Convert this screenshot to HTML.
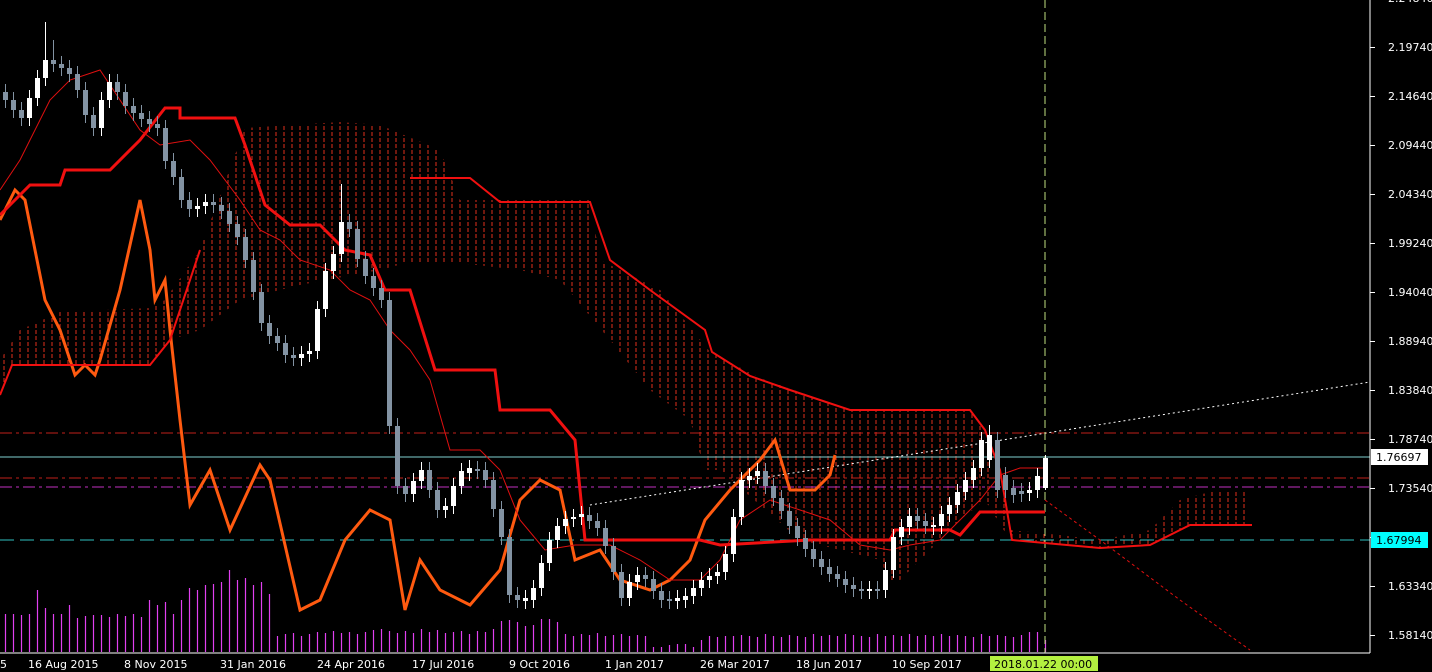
<!DOCTYPE html><html><head><style>
html,body{margin:0;padding:0;background:#000;width:1432px;height:672px;overflow:hidden}
svg{position:absolute;left:0;top:0}
text{font-family:"DejaVu Sans","Liberation Sans",sans-serif;font-size:11px;fill:#fff}
</style></head><body>
<svg width="1432" height="672" viewBox="0 0 1432 672">
<defs>
<pattern id="h" width="8" height="6" patternUnits="userSpaceOnUse">
<line x1="4" y1="0" x2="4" y2="4" stroke="#e0301c" stroke-width="1"/>
</pattern>
</defs>
<path stroke="#e040f0" stroke-width="1.2" fill="none" d="M5.5 652V614M13.5 652V614M21.5 652V615M29.5 652V614M37.5 652V590M45.5 652V608M53.5 652V614M61.5 652V614M69.5 652V605M77.5 652V618M85.5 652V616M93.5 652V615M101.5 652V615M109.5 652V617M117.5 652V614M125.5 652V616M133.5 652V614M141.5 652V617M149.5 652V600M157.5 652V605M165.5 652V602M173.5 652V614M181.5 652V600M189.5 652V588M197.5 652V590M205.5 652V585M213.5 652V584M221.5 652V582M229.5 652V570M237.5 652V580M245.5 652V578M253.5 652V585M261.5 652V582M269.5 652V594M277.5 652V636M285.5 652V634M293.5 652V633M301.5 652V636M309.5 652V634M317.5 652V632M325.5 652V633M333.5 652V631M341.5 652V633M349.5 652V632M357.5 652V634M365.5 652V632M373.5 652V630M381.5 652V629M389.5 652V631M397.5 652V633M405.5 652V631M413.5 652V633M421.5 652V629M429.5 652V632M437.5 652V630M445.5 652V633M453.5 652V632M461.5 652V631M469.5 652V634M477.5 652V631M485.5 652V632M493.5 652V629M501.5 652V621M509.5 652V620M517.5 652V622M525.5 652V626M533.5 652V625M541.5 652V619M549.5 652V619M557.5 652V622M565.5 652V634M573.5 652V636M581.5 652V634M589.5 652V635M597.5 652V633M605.5 652V636M613.5 652V635M621.5 652V634M629.5 652V636M637.5 652V635M645.5 652V636M653.5 652V647M661.5 652V647M669.5 652V645M677.5 652V644M685.5 652V644M693.5 652V647M701.5 652V640M709.5 652V636M717.5 652V637M725.5 652V636M733.5 652V636M741.5 652V635M749.5 652V636M757.5 652V637M765.5 652V634M773.5 652V636M781.5 652V637M789.5 652V635M797.5 652V636M805.5 652V637M813.5 652V634M821.5 652V636M829.5 652V635M837.5 652V636M845.5 652V634M853.5 652V635M861.5 652V636M869.5 652V637M877.5 652V634M885.5 652V636M893.5 652V635M901.5 652V636M909.5 652V634M917.5 652V636M925.5 652V635M933.5 652V636M941.5 652V634M949.5 652V636M957.5 652V635M965.5 652V636M973.5 652V637M981.5 652V634M989.5 652V636M997.5 652V635M1005.5 652V636M1013.5 652V637M1021.5 652V635M1029.5 652V632M1037.5 652V632M1045.5 652V640"/>
<polygon fill="url(#h)" points="0,360 20,330 60,312 150,308 165,300 200,250 245,128 340,122 380,125 440,150 460,200 510,200 590,200 600,260 660,290 710,352 760,378 850,410 970,410 985,430 1000,470 1010,530 1060,535 1100,540 1150,530 1180,500 1210,492 1250,490 1250,525 1190,525 1150,545 1100,548 1010,540 985,500 960,520 900,580 890,580 880,560 800,540 720,470 705,470 690,420 650,390 610,340 560,280 520,270 450,262 410,262 380,270 300,285 240,300 200,330 170,340 150,365 10,365 0,395"/>
<line x1="0" y1="433" x2="1370" y2="433" stroke="#c0201a" stroke-dasharray="12,4,3,4"/>
<line x1="0" y1="478" x2="1370" y2="478" stroke="#c0201a" stroke-dasharray="12,4,3,4"/>
<line x1="0" y1="487" x2="1370" y2="487" stroke="#c030c0" stroke-dasharray="12,4,3,4"/>
<line x1="0" y1="457" x2="1370" y2="457" stroke="#80d0d0"/>
<line x1="0" y1="540" x2="1370" y2="540" stroke="#30c0c0" stroke-dasharray="14,6"/>
<line x1="590" y1="505" x2="1370" y2="382" stroke="#fff" stroke-dasharray="2,3"/>
<line x1="1045" y1="0" x2="1045" y2="653" stroke="#c0e080" stroke-dasharray="8,4"/>
<polyline fill="none" stroke="#ff5a10" stroke-width="3" points="0,220 15,190 25,200 45,300 60,330 75,375 85,365 95,375 100,360 120,290 140,200 150,250 155,300 165,280 170,330 180,420 190,505 210,470 230,530 260,465 270,480 300,610 320,600 345,540 370,510 390,520 405,610 420,560 440,590 470,605 500,570 520,500 540,480 560,490 575,560 600,550 620,580 650,590 670,580 690,560 705,520 730,490 760,460 775,440 790,490 815,490 830,475 835,455"/>
<polyline fill="none" stroke="#f01010" stroke-width="3" points="0,215 30,185 60,185 65,170 110,170 140,140 165,108 180,108 180,118 235,118 245,145 265,205 290,225 320,225 330,235 345,250 370,255 385,290 410,290 435,370 495,370 500,410 550,410 575,440 585,540 700,540 720,545 810,540 890,540 895,530 950,530 960,535 980,512 1045,512"/>
<polyline fill="none" stroke="#f01010" stroke-width="2" points="410,178 470,178 500,202 590,202 610,260 650,290 705,330 712,352 750,376 790,390 850,410 970,410 985,430 1000,470 1012,540 1100,548 1150,545 1190,525 1252,525"/>
<polyline fill="none" stroke="#f01010" stroke-width="2" points="0,395 12,365 150,365 170,340 200,250"/>
<polyline fill="none" stroke="#e01010" stroke-width="1" points="0,190 20,160 50,100 70,80 100,70 120,100 140,130 160,145 190,140 210,160 240,200 260,230 280,240 300,260 330,270 350,290 370,300 390,330 410,350 430,380 450,450 480,450 500,470 520,520 545,550 575,545 610,545 640,560 670,580 700,580 720,560 740,520 770,500 800,510 830,520 860,545 890,550 910,545 940,540 960,520 980,500 1000,475 1020,468 1045,468"/>
<polyline fill="none" stroke="#e01010" stroke-width="1" stroke-dasharray="3,3" points="1045,500 1100,540 1180,600 1250,650"/>
<path fill="none" stroke="#8393a3" stroke-width="1" d="M5.5 84V108M13.5 92V118M21.5 102V126M53.5 40V72M61.5 56V76M69.5 60V82M77.5 66V98M85.5 82V123M93.5 107V136M117.5 74V100M125.5 84V114M133.5 98V121M141.5 105V127M149.5 111V132M157.5 116V136M165.5 120V169M173.5 153V185M181.5 169V208M189.5 192V217M213.5 194V213M221.5 197V219M229.5 203V232M237.5 216V245M245.5 229V268M253.5 252V300M261.5 284V331M269.5 315V344M277.5 328V351M285.5 335V363M293.5 347V366M349.5 214V237M357.5 221V267M365.5 251V284M373.5 268V296M381.5 280V308M389.5 292V434M397.5 418V494M405.5 478V502M429.5 462V498M437.5 482V518M477.5 461V479M485.5 462V488M493.5 472V517M501.5 501V545M509.5 529V603M517.5 587V608M589.5 507V529M597.5 513V536M605.5 520V554M613.5 538V580M621.5 564V606M645.5 567V587M653.5 571V599M661.5 583V608M669.5 591V609M765.5 463V494M773.5 478V506M781.5 490V519M789.5 503V534M797.5 518V546M805.5 530V557M813.5 541V567M821.5 551V575M829.5 559V582M837.5 566V587M845.5 571V593M853.5 577V597M861.5 581V599M877.5 581V599M917.5 508V529M925.5 513V534M997.5 432V498M1005.5 467V498M1013.5 480V503M1021.5 483V502"/>
<path fill="none" stroke="#8393a3" stroke-width="5" d="M5.5 92V100M13.5 100V110M21.5 110V118M53.5 60V64M61.5 64V68M69.5 68V74M77.5 74V90M85.5 90V115M93.5 115V128M117.5 82V92M125.5 92V106M133.5 106V113M141.5 113V119M149.5 119V124M157.5 124V128M165.5 128V161M173.5 161V177M181.5 177V200M189.5 200V209M213.5 202V205M221.5 205V211M229.5 211V224M237.5 224V237M245.5 237V260M253.5 260V292M261.5 292V323M269.5 323V336M277.5 336V343M285.5 343V355M293.5 355V358M349.5 222V229M357.5 229V259M365.5 259V276M373.5 276V288M381.5 288V300M389.5 300V426M397.5 426V486M405.5 486V494M429.5 470V490M437.5 490V510M477.5 469V471M485.5 470V480M493.5 480V509M501.5 509V537M509.5 537V595M517.5 595V600M589.5 515V521M597.5 521V528M605.5 528V546M613.5 546V572M621.5 572V598M645.5 575V579M653.5 579V591M661.5 591V600M669.5 599V601M765.5 471V486M773.5 486V498M781.5 498V511M789.5 511V526M797.5 526V538M805.5 538V549M813.5 549V559M821.5 559V567M829.5 567V574M837.5 574V579M845.5 579V585M853.5 585V589M861.5 589V591M877.5 589V591M917.5 516V521M925.5 521V526M997.5 440V490M1005.5 475V490M1013.5 488V495M1021.5 491V494"/>
<path fill="none" stroke="#fff" stroke-width="1" d="M29.5 90V126M37.5 70V106M45.5 22V86M101.5 92V136M109.5 74V108M197.5 198V217M205.5 194V214M301.5 346V366M309.5 343V362M317.5 301V359M325.5 263V317M333.5 246V279M341.5 184V262M413.5 473V502M421.5 462V489M445.5 498V518M453.5 478V514M461.5 463V494M469.5 460V481M525.5 590V609M533.5 580V608M541.5 555V596M549.5 532V571M557.5 518V548M565.5 511V534M573.5 509V527M581.5 506V525M629.5 574V606M637.5 567V590M677.5 590V609M685.5 588V608M693.5 580V604M701.5 572V596M709.5 568V588M717.5 564V584M725.5 546V580M733.5 509V562M741.5 472V525M749.5 468V488M757.5 463V484M869.5 581V599M885.5 562V598M893.5 529V578M901.5 519V545M909.5 508V535M933.5 517V535M941.5 506V534M949.5 497V522M957.5 484V513M965.5 472V500M973.5 460V488M981.5 432V476M989.5 425V468M1029.5 482V501M1037.5 468V498M1045.5 455V490"/>
<path fill="none" stroke="#fff" stroke-width="5" d="M29.5 98V118M37.5 78V98M45.5 60V78M101.5 100V128M109.5 82V100M197.5 206V209M205.5 202V206M301.5 354V358M309.5 351V354M317.5 309V351M325.5 271V309M333.5 254V271M341.5 222V254M413.5 481V494M421.5 470V481M445.5 506V510M453.5 486V506M461.5 471V486M469.5 468V473M525.5 598V601M533.5 588V600M541.5 563V588M549.5 540V563M557.5 526V540M565.5 519V526M573.5 517V519M581.5 514V517M629.5 582V598M637.5 575V582M677.5 598V601M685.5 596V600M693.5 588V596M701.5 580V588M709.5 576V580M717.5 572V576M725.5 554V572M733.5 517V554M741.5 480V517M749.5 476V480M757.5 471V476M869.5 589V591M885.5 570V590M893.5 537V570M901.5 527V537M909.5 516V527M933.5 525V527M941.5 514V526M949.5 505V514M957.5 492V505M965.5 480V492M973.5 468V480M981.5 440V468M989.5 435V460M1029.5 490V493M1037.5 476V490M1045.5 458V488"/>
<line x1="1370" y1="0" x2="1370" y2="653" stroke="#fff"/>
<line x1="0" y1="653" x2="1370" y2="653" stroke="#fff"/>
<path stroke="#fff" d="M1370 47.5h5M1370 96.5h5M1370 145.5h5M1370 194.5h5M1370 243.5h5M1370 292.5h5M1370 341.5h5M1370 390.5h5M1370 439.5h5M1370 488.5h5M1370 537.5h5M1370 586.5h5M1370 635.5h5"/>
<text x="1388" y="51">2.19740</text>
<text x="1388" y="100">2.14640</text>
<text x="1388" y="149">2.09440</text>
<text x="1388" y="198">2.04340</text>
<text x="1388" y="247">1.99240</text>
<text x="1388" y="296">1.94040</text>
<text x="1388" y="345">1.88940</text>
<text x="1388" y="394">1.83840</text>
<text x="1388" y="443">1.78740</text>
<text x="1388" y="492">1.73540</text>
<text x="1388" y="590">1.63340</text>
<text x="1388" y="639">1.58140</text>
<text x="1388" y="2">2.24840</text>
<rect x="1371" y="449" width="57" height="16" fill="#fff"/>
<text x="1376" y="461" style="fill:#000">1.76697</text>
<rect x="1371" y="532" width="57" height="16" fill="#00ffff"/>
<text x="1376" y="544" style="fill:#000">1.67994</text>
<text x="0" y="668">5</text>
<text x="28" y="668">16 Aug 2015</text>
<text x="124" y="668">8 Nov 2015</text>
<text x="220" y="668">31 Jan 2016</text>
<text x="317" y="668">24 Apr 2016</text>
<text x="412" y="668">17 Jul 2016</text>
<text x="509" y="668">9 Oct 2016</text>
<text x="605" y="668">1 Jan 2017</text>
<text x="700" y="668">26 Mar 2017</text>
<text x="796" y="668">18 Jun 2017</text>
<text x="892" y="668">10 Sep 2017</text>
<rect x="990" y="656" width="108" height="15" fill="#b4f040"/>
<text x="994" y="668" style="fill:#000">2018.01.22 00:00</text>
</svg>
</body></html>
